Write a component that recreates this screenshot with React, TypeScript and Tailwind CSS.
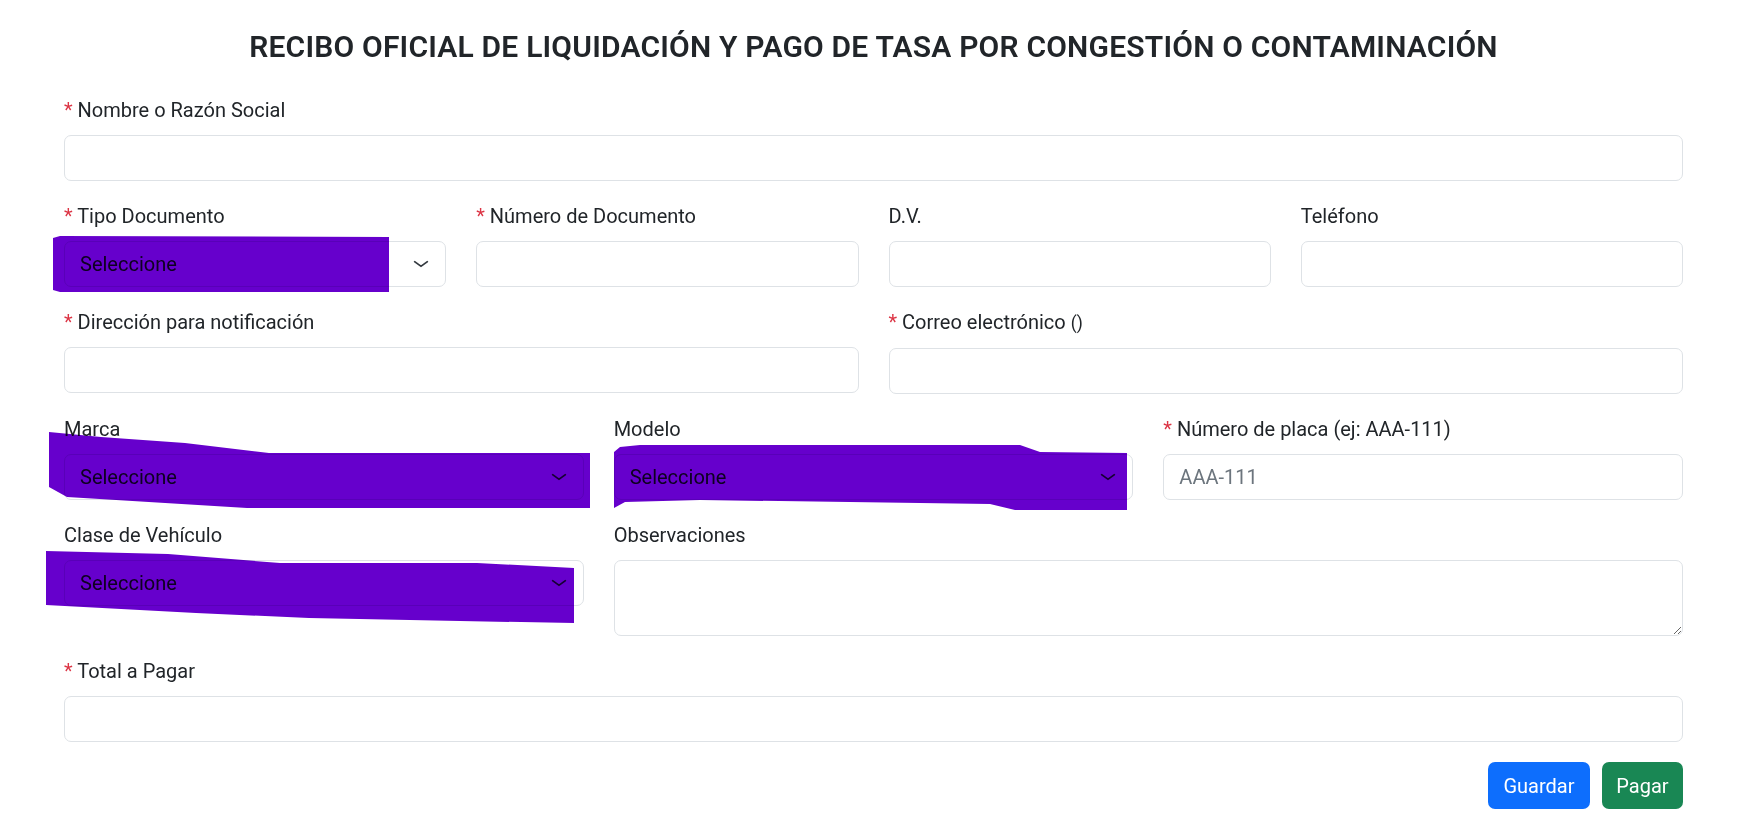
import type { ReactNode } from "react";

const inputCls =
  "block w-full h-[46px] rounded-[7px] border border-[#dee2e6] bg-white px-[15px] text-[20px] text-[#212529] placeholder:text-[#6c757d] outline-none";

function Label({ children, required }: { children: ReactNode; required?: boolean }) {
  return (
    <label className="mb-[10px] block text-[20px] leading-[30px] text-[#212529]">
      {required && <span className="text-[#dc3545]">* </span>}
      {children}
    </label>
  );
}

function Field({ label, required, children }: { label: ReactNode; required?: boolean; children: ReactNode }) {
  return (
    <div className="mb-[20px] min-w-0">
      <Label required={required}>{label}</Label>
      {children}
    </div>
  );
}

function Select() {
  return (
    <div className="relative">
      <select className={`${inputCls} appearance-none pr-[50px] text-[#2b2f33]`} defaultValue="">
        <option value="">Seleccione</option>
      </select>
      <svg
        className="pointer-events-none absolute right-[15px] top-1/2 h-[15px] w-[20px] -translate-y-1/2"
        viewBox="0 0 16 16"
        preserveAspectRatio="none"
        fill="none"
        stroke="#343a40"
        strokeWidth="1.6"
        strokeLinecap="round"
        strokeLinejoin="round"
      >
        <path d="m3 5.5 5 5 5-5" />
      </svg>
    </div>
  );
}

// redaction marks drawn over the selects
function Scribbles() {
  return (
    <svg
      className="pointer-events-none absolute left-0 top-0 mix-blend-multiply"
      width="1757"
      height="833"
      viewBox="0 0 1757 833"
    >
      <g fill="#6600cc">
        <polygon points="53,238 60,236 389,237 389,292 60,292 53,290" />
        <polygon points="49,432 101,437 185,443 269,453 590,453 590,508 247,508 67,497 49,487" />
        <polygon points="614,452 620,447 640,445 1020,445 1040,452 1127,453 1127,510 1015,510 990,504 700,500 625,502 614,508" />
        <polygon points="46,551 168,554 280,563 477,563 574,568 574,623 460,621 309,618 196,613 46,605" />
      </g>
    </svg>
  );
}

export default function App() {
  return (
    <div className="relative h-[833px] w-full overflow-hidden bg-white font-['Roboto','Segoe_UI',sans-serif] text-[#212529]">
      <div className="pl-[64px] pr-[74px]">
        <h4 className="pt-[29px] pb-[30px] text-center text-[30px] font-semibold leading-[36px] tracking-[0.2px] text-[#212529]">
          RECIBO OFICIAL DE LIQUIDACIÓN Y PAGO DE TASA POR CONGESTIÓN O CONTAMINACIÓN
        </h4>

        <Field label="Nombre o Razón Social" required>
          <input className={inputCls} />
        </Field>

        <div className="grid grid-cols-4 gap-x-[30px]">
          <Field label="Tipo Documento" required>
            <Select />
          </Field>
          <Field label="Número de Documento" required>
            <input className={inputCls} />
          </Field>
          <Field label="D.V.">
            <input className={inputCls} />
          </Field>
          <Field label="Teléfono">
            <input className={inputCls} />
          </Field>
        </div>

        <div className="grid grid-cols-2 gap-x-[30px]">
          <Field label="Dirección para notificación" required>
            <input className={inputCls} />
          </Field>
          <Field
            label={
              <>
                Correo electrónico <small className="text-[17.5px]">()</small>
              </>
            }
            required
          >
            <input className={inputCls} />
          </Field>
        </div>

        <div className="grid grid-cols-3 gap-x-[30px]">
          <Field label="Marca">
            <Select />
          </Field>
          <Field label="Modelo">
            <Select />
          </Field>
          <Field label="Número de placa (ej: AAA-111)" required>
            <input className={inputCls} placeholder="AAA-111" />
          </Field>
        </div>

        <div className="grid grid-cols-3 gap-x-[30px]">
          <Field label="Clase de Vehículo">
            <Select />
          </Field>
          <div className="col-span-2">
            <Field label="Observaciones">
              <textarea
                rows={2}
                className="block h-[76px] w-full rounded-[7px] border border-[#dee2e6] bg-white px-[15px] py-[7px] text-[20px] outline-none"
              />
            </Field>
          </div>
        </div>

        <Field label="Total a Pagar" required>
          <input className={inputCls} />
        </Field>

        <div className="flex justify-end gap-[12px]">
          <button className="h-[47px] w-[102px] rounded-[7px] bg-[#0d6efd] text-[20px] text-white">Guardar</button>
          <button className="h-[47px] w-[81px] rounded-[7px] bg-[#198754] text-[20px] text-white">Pagar</button>
        </div>
      </div>
      <Scribbles />
    </div>
  );
}
